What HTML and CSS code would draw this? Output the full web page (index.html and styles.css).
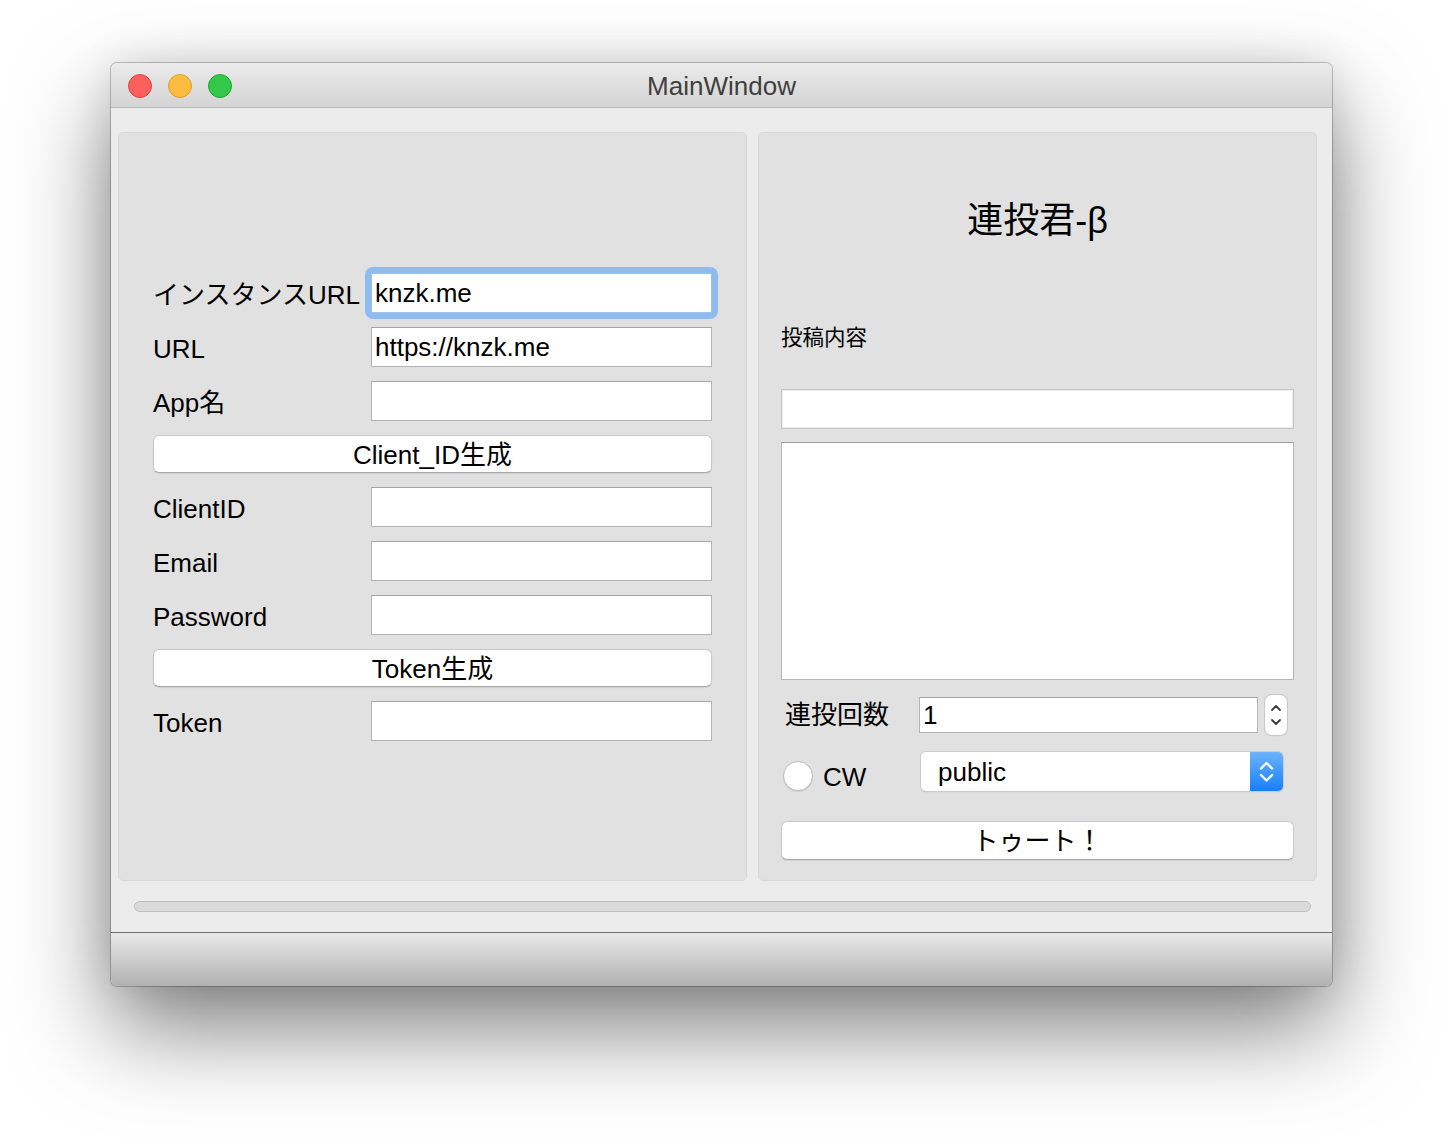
FILE: index.html
```html
<!DOCTYPE html>
<html lang="ja">
<head>
<meta charset="utf-8">
<title>MainWindow</title>
<link rel="stylesheet" href="styles.css">
</head>
<body>
<div class="window">
  <div class="titlebar">
    <div class="lights">
      <span class="light red"></span>
      <span class="light yellow"></span>
      <span class="light green"></span>
    </div>
    <div class="title">MainWindow</div>
    <div></div>
  </div>
  <div class="content">
    <div class="panels">
      <div class="panel left">
        <div class="form">
          <div class="row">
            <span class="label">インスタンスURL</span>
            <span class="focus-ring"><span class="field focused">knzk.me</span></span>
          </div>
          <div class="row">
            <span class="label">URL</span>
            <span class="field">https://knzk.me</span>
          </div>
          <div class="row">
            <span class="label">App名</span>
            <span class="field"></span>
          </div>
          <div class="button">Client_ID生成</div>
          <div class="row">
            <span class="label">ClientID</span>
            <span class="field"></span>
          </div>
          <div class="row">
            <span class="label">Email</span>
            <span class="field"></span>
          </div>
          <div class="row">
            <span class="label">Password</span>
            <span class="field"></span>
          </div>
          <div class="button">Token生成</div>
          <div class="row">
            <span class="label">Token</span>
            <span class="field"></span>
          </div>
        </div>
      </div>
      <div class="panel right">
        <div class="app-title">連投君-β</div>
        <div class="small-label">投稿内容</div>
        <div class="lineedit"></div>
        <div class="textarea"></div>
        <div class="spin-row">
          <span class="spin-label">連投回数</span>
          <span class="spin-field">1</span>
          <span class="stepper">
            <svg width="22" height="40" viewBox="0 0 22 40"><path d="M7 15 L11 11 L15 15" fill="none" stroke="#3a3a3a" stroke-width="1.8" stroke-linecap="round" stroke-linejoin="round"/><path d="M7 25 L11 29 L15 25" fill="none" stroke="#3a3a3a" stroke-width="1.8" stroke-linecap="round" stroke-linejoin="round"/></svg>
          </span>
        </div>
        <div class="option-row">
          <span class="cw">
            <span class="radio"></span>
            <span class="cw-label">CW</span>
          </span>
          <span class="select">
            <span class="select-text">public</span>
            <span class="select-arrow">
              <svg width="33" height="39" viewBox="0 0 33 39"><path d="M11 16.5 L16.5 11 L22 16.5" fill="none" stroke="#fff" stroke-width="2.4" stroke-linecap="round" stroke-linejoin="round"/><path d="M11 23 L16.5 28.5 L22 23" fill="none" stroke="#fff" stroke-width="2.4" stroke-linecap="round" stroke-linejoin="round"/></svg>
            </span>
          </span>
        </div>
        <div class="button toot">トゥート！</div>
      </div>
    </div>
    <div class="progress"></div>
  </div>
  <div class="separator"></div>
  <div class="bottombar"></div>
</div>
</body>
</html>
```

FILE: styles.css
```css
* { box-sizing: border-box; }

html, body {
  margin: 0;
  background: #ffffff;
}

body {
  height: 100vh;
  min-height: 1146px;
  overflow: hidden;
  padding: 63px 0 0 111px;
  font-family: "Liberation Sans", "Noto Sans CJK JP", sans-serif;
  font-size: 26px;
  color: #000;
}

.window {
  width: 1221px;
  height: 923px;
  border-radius: 6px;
  overflow: hidden;
  display: flex;
  flex-direction: column;
  box-shadow: 0 0 0 1px rgba(0,0,0,0.22), 0 42px 95px rgba(0,0,0,0.5), 0 0 40px rgba(0,0,0,0.1);
  background: #ececec;
}

.titlebar {
  height: 45px;
  flex: none;
  border-bottom: 1px solid #b9b9b9;
  background: linear-gradient(#ebebeb, #d4d4d4);
  display: grid;
  grid-template-columns: 1fr auto 1fr;
  align-items: center;
}

.lights {
  display: flex;
  gap: 16px;
  padding-left: 17px;
  padding-top: 1px;
}

.light {
  width: 24px;
  height: 24px;
  border-radius: 50%;
  display: block;
}
.light.red { background: #fc605c; border: 1px solid #e0443e; }
.light.yellow { background: #fdbc40; border: 1px solid #dea123; }
.light.green { background: #34c84a; border: 1px solid #1aab29; }

.title {
  font-size: 26px;
  color: #404040;
  padding-top: 3px;
}

.content {
  height: 824px;
  flex: none;
  padding: 24px 15px 0 7px;
  background: #ececec;
}

.panels {
  display: flex;
  gap: 11px;
  height: 749px;
}

.panel {
  background: #e1e1e1;
  border: 1px solid #d9d9d9;
  border-radius: 5px;
}

.panel.left {
  width: 629px;
  display: flex;
  flex-direction: column;
  justify-content: center;
  padding: 0 34px;
}

.form {
  display: flex;
  flex-direction: column;
  gap: 14px;
}

.row {
  display: flex;
  align-items: flex-start;
  height: 40px;
}

.label {
  display: block;
  width: 218px;
  height: 40px;
  flex: none;
  white-space: nowrap;
  line-height: 40px;
  padding-top: 2px;
}

.field {
  display: block;
  flex: 1;
  height: 40px;
  background: #fff;
  border: 1px solid #b4b4b4;
  border-top-color: #a4a4a4;
  line-height: 39px;
  padding-left: 3px;
}

.focus-ring {
  display: block;
  flex: 1;
  margin: -6px;
  padding: 6px;
  border-radius: 8px;
  background: #8fbcef;
}

.field.focused {
  border-color: #9cc1ea;
}

.button {
  height: 38px;
  background: #fff;
  border: 1px solid #c9c9c9;
  border-bottom-color: #a9a9a9;
  border-radius: 6px;
  box-shadow: 0 1px 1px rgba(0,0,0,0.08);
  text-align: center;
  line-height: 38px;
}

.panel.right {
  width: 559px;
  display: flex;
  flex-direction: column;
  padding: 0 22px;
}

.app-title {
  margin-top: 66px;
  height: 40px;
  line-height: 40px;
  font-size: 36px;
  text-align: center;
  padding-top: 2px;
}

.small-label {
  margin-top: 86px;
  height: 26px;
  line-height: 26px;
  font-size: 21.5px;
}

.lineedit {
  margin-top: 38px;
  height: 40px;
  background: #fff;
  border: 1px solid #c6c6c6;
  box-shadow: inset 0 0 0 1px #ececec;
}

.textarea {
  margin-top: 13px;
  height: 238px;
  background: #fff;
  border: 1px solid #b6b6b6;
  border-top-color: #9d9d9d;
}

.spin-row {
  margin-top: 15px;
  height: 40px;
  display: flex;
  align-items: center;
}

.spin-label {
  display: block;
  width: 138px;
  height: 40px;
  flex: none;
  padding-left: 4px;
  line-height: 40px;
}

.spin-field {
  width: 339px;
  height: 36px;
  background: #fff;
  border: 1px solid #b4b4b4;
  border-top-color: #a4a4a4;
  line-height: 35px;
  padding-left: 3px;
}

.stepper {
  margin-left: 7px;
  width: 22px;
  height: 40px;
  background: #fff;
  border-radius: 7px;
  box-shadow: 0 0 0 1px #c8c8c8, 0 1px 1px rgba(0,0,0,0.15);
  display: block;
}

.stepper svg { display: block; }

.option-row {
  margin-top: 17px;
  height: 39px;
  display: flex;
  align-items: center;
}

.cw {
  width: 140px;
  flex: none;
  display: flex;
  align-items: center;
  padding-left: 2px;
  padding-top: 9px;
}

.radio {
  width: 30px;
  height: 30px;
  border-radius: 50%;
  background: #fff;
  border: 1px solid #bdbdbd;
  box-shadow: 0 1px 1px rgba(0,0,0,0.1);
  flex: none;
}

.cw-label {
  margin-left: 10px;
  padding-top: 2px;
}

.select {
  width: 362px;
  height: 39px;
  background: #fff;
  border-radius: 5px;
  box-shadow: 0 0 0 1px #cbcbcb, 0 1px 1px rgba(0,0,0,0.2);
  display: flex;
  overflow: hidden;
}

.select-text {
  flex: 1;
  padding-left: 17px;
  line-height: 39px;
  padding-top: 1px;
}

.select-arrow {
  width: 33px;
  height: 39px;
  background: linear-gradient(#6db3fb, #1580fb);
  display: block;
}

.select-arrow svg { display: block; }

.button.toot {
  margin-top: 30px;
  height: 39px;
  line-height: 39px;
}

.progress {
  margin: 20px 6px 0 16px;
  height: 11px;
  border-radius: 6px;
  background: #dbdbdb;
  border: 1px solid #bebebe;
}

.separator {
  height: 1px;
  flex: none;
  background: #707070;
}

.bottombar {
  flex: 1;
  background: linear-gradient(#e9e9e9, #b1b1b1);
}
```
